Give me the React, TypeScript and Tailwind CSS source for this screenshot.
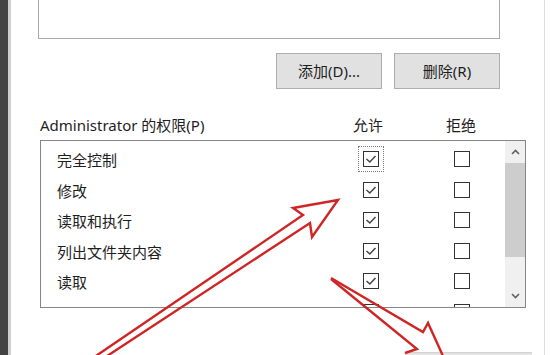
import React from "react";

const ROWS = [
  { name: "完全控制", allow: true, focus: true },
  { name: "修改", allow: true },
  { name: "读取和执行", allow: true },
  { name: "列出文件夹内容", allow: true },
  { name: "读取", allow: true },
  { name: "写入", allow: true },
];

function CheckBox({ checked }: { checked?: boolean }) {
  return (
    <div className="w-[16px] h-[16px] border border-[#333333] bg-white flex items-center justify-center shrink-0">
      {checked && (
        <svg width="12" height="12" viewBox="0 0 12 12">
          <polyline points="1.5,6 4.8,9 10.5,3" fill="none" stroke="#444444" strokeWidth="1.5" />
        </svg>
      )}
    </div>
  );
}

function Chevron({ up }: { up?: boolean }) {
  return (
    <svg width="9" height="6" viewBox="0 0 9 6">
      <polyline
        points={up ? "1,5 4.5,1.5 8,5" : "1,1 4.5,4.5 8,1"}
        fill="none"
        stroke="#606060"
        strokeWidth="1.6"
      />
    </svg>
  );
}

export default function App() {
  return (
    <div className="relative w-[550px] h-[355px] overflow-hidden bg-white flex text-[15px] text-[#1e1e1e] font-['Noto_Sans','Noto_Sans_CJK_SC',sans-serif] leading-[20px]">
      {/* window edge on the left */}
      <div className="w-[8px] bg-[#434343]" />
      <div className="w-[3px] bg-[#cfcfcf]" />

      {/* dialog body */}
      <div className="w-[533px] flex flex-col">
        <div className="shrink-0 mt-[-1px] ml-[27px] w-[462px] h-[40px] border border-[#a8a8a8] bg-white" />

        <div className="shrink-0 mt-[14px] ml-[265px] flex gap-[12px]">
          <button className="w-[106px] h-[36px] bg-[#e1e1e1] border border-[#adadad] flex items-center justify-center">
            添加(D)...
          </button>
          <button className="w-[106px] h-[36px] bg-[#e1e1e1] border border-[#adadad] flex items-center justify-center">
            删除(R)
          </button>
        </div>

        <div className="shrink-0 mt-[26px] ml-[29px] flex h-[20px]">
          <span className="w-[313px]">Administrator 的权限(P)</span>
          <span className="w-[30px] text-center">允许</span>
          <span className="ml-[63px] w-[30px] text-center">拒绝</span>
        </div>

        <div className="shrink-0 mt-[5px] ml-[29px] w-[486px] h-[168px] border border-[#868686] flex">
          <div className="flex-1 overflow-hidden pt-[3px]">
            {ROWS.map((row) => (
              <div key={row.name} className="h-[30.5px] flex items-center">
                <span className="w-[322px] pl-[16px] pt-[2px]">{row.name}</span>
                <div className={row.focus ? "outline outline-1 outline-dotted outline-offset-[4px] outline-[#7a7a7a]" : ""}>
                  <CheckBox checked={row.allow} />
                </div>
                <div className="ml-[75px]">
                  <CheckBox />
                </div>
              </div>
            ))}
          </div>
          <div className="w-[20px] bg-[#f0f0f0] flex flex-col">
            <div className="h-[22px] flex items-center justify-center">
              <Chevron up />
            </div>
            <div className="h-[94px] bg-[#cdcdcd]" />
            <div className="flex-1" />
            <div className="h-[22px] flex items-center justify-center">
              <Chevron />
            </div>
          </div>
        </div>

        <div className="shrink-0 mt-[44px] ml-[394px] w-[127px] h-[10px] bg-[#e3e3e3] border-t border-[#d2d2d2]" />
      </div>

      <div className="w-[1px] bg-[#dcdcdc]" />
      <div className="flex-1 bg-white" />

      {/* red annotation arrows */}
      <svg className="absolute inset-0 pointer-events-none" width="550" height="355" viewBox="0 0 550 355">
        <polyline
          points="90,360 303,215 293,208 338,200 312,237 310,223 101,360"
          fill="none"
          stroke="#d02525"
          strokeWidth="2.4"
          strokeLinejoin="miter"
        />
        <polyline points="331,278 423,332 428,323 443,356" fill="none" stroke="#d02525" strokeWidth="2.4" />
        <polyline points="331,279 417,349 405,353" fill="none" stroke="#d02525" strokeWidth="2.4" />
      </svg>
    </div>
  );
}
